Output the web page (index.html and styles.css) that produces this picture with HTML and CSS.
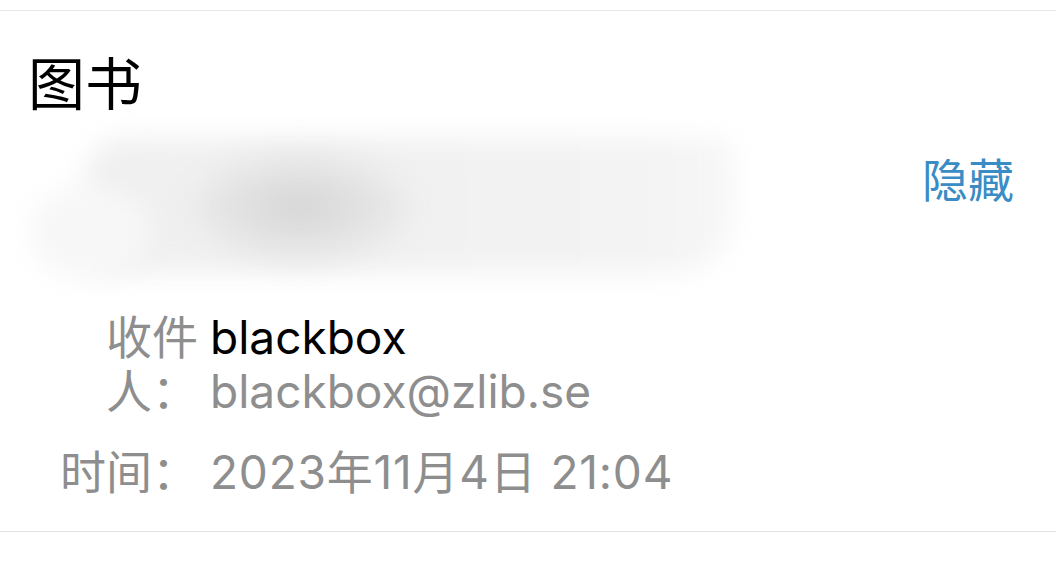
FILE: index.html
```html
<!DOCTYPE html>
<html lang="zh-CN">
<head>
<meta charset="utf-8">
<title>图书</title>
<link rel="stylesheet" href="styles.css">
</head>
<body>
<div class="card">
  <h1 class="title">图书</h1>
  <div class="sender-row">
    <div class="redacted" aria-hidden="true">
      <div class="blob blob-a"></div>
      <div class="blob blob-b"></div>
      <div class="blob blob-c"></div>
    </div>
    <a class="hide-link">隐藏</a>
  </div>
  <div class="details">
    <div class="label">收件人：</div>
    <div class="value">
      <div class="name">blackbox</div>
      <div class="muted">blackbox@zlib.se</div>
    </div>
    <div class="label">时间：</div>
    <div class="value muted date">2023年11月4日 21:04</div>
  </div>
</div>
</body>
</html>
```
FILE: styles.css
```css
html, body {
  margin: 0;
  padding: 0;
  background: #ffffff;
}
body {
  font-family: "Inter", "Noto Sans CJK SC", sans-serif;
  color: #000;
}
.card {
  margin-top: 10px;
  border-top: 1px solid #e6e6e6;
  border-bottom: 1px solid #e3e3e3;
  padding: 0 42px 32px 30px;
}
.title {
  margin: 0;
  padding-top: 29px;
  font-family: "Noto Sans CJK SC", sans-serif;
  font-weight: 400;
  font-size: 57px;
  line-height: 80px;
  margin-left: -2px;
}
.sender-row {
  display: flex;
  justify-content: space-between;
  align-items: flex-start;
  margin-top: 2px;
}
.redacted {
  position: relative;
  width: 700px;
  height: 155px;
  margin: 8px 0 25px 0;
}
.blob {
  position: absolute;
  filter: blur(13px);
}
.blob-a {
  left: 55px;
  top: 8px;
  width: 650px;
  height: 135px;
  border-radius: 40px 20px 60px 30px;
  background: linear-gradient(90deg, #f0f0f0 0%, #f1f1f1 50%, #f3f3f3 85%, #f7f7f7 100%);
}
.blob-b {
  left: 160px;
  top: 22px;
  width: 220px;
  height: 110px;
  border-radius: 50%;
  background: radial-gradient(ellipse at 50% 50%, #d5d5d5 0%, #e0e0e0 35%, #eaeaea 70%, rgba(240,240,240,0) 100%);
}
.blob-c {
  left: 0;
  top: 55px;
  width: 120px;
  height: 95px;
  border-radius: 50%;
  background: #f7f7f7;
}
.hide-link {
  margin-top: 28px;
  font-family: "Noto Sans CJK SC", sans-serif;
  font-size: 46px;
  line-height: 54px;
  color: #3a8dc4;
}
.details {
  display: grid;
  grid-template-columns: 138px auto;
  column-gap: 12px;
  row-gap: 27px;
  padding-left: 30px;
  font-size: 46px;
  line-height: 54px;
}
.label {
  text-align: right;
  color: #8e8e8e;
}
.name {
  color: #000;
}
.muted {
  color: #8e8e8e;
}
.date {
  letter-spacing: 0.8px;
}
```
